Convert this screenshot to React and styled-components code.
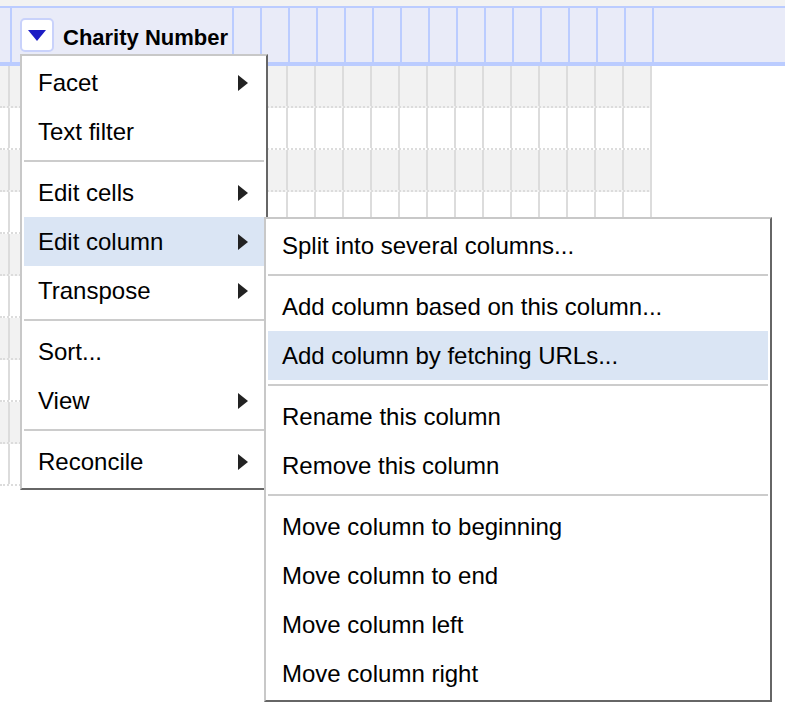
import styled, { createGlobalStyle } from 'styled-components';

const GlobalStyle = createGlobalStyle`
  body {
    margin: 0;
    background: #fff;
    font-family: "Liberation Sans", Arial, sans-serif;
  }
`

const NARROW_COLS = 15
const ROWS = 10

const mainMenu = [
    { label: 'Facet', sub: true },
    { label: 'Text filter' },
    'sep',
    { label: 'Edit cells', sub: true },
    { label: 'Edit column', sub: true, active: true },
    { label: 'Transpose', sub: true },
    'sep',
    { label: 'Sort...' },
    { label: 'View', sub: true },
    'sep',
    { label: 'Reconcile', sub: true },
]

const columnMenu = [
    { label: 'Split into several columns...' },
    'sep',
    { label: 'Add column based on this column...' },
    { label: 'Add column by fetching URLs...', active: true },
    'sep',
    { label: 'Rename this column' },
    { label: 'Remove this column' },
    'sep',
    { label: 'Move column to beginning' },
    { label: 'Move column to end' },
    { label: 'Move column left' },
    { label: 'Move column right' },
]

const MenuItems = ({ items }) => (
    <>
        {items.map((item, i) =>
            item === 'sep' ? (
                <Separator key={i} />
            ) : (
                <Item key={i} $active={item.active}>
                    <span>{item.label}</span>
                    {item.sub && <Arrow />}
                </Item>
            )
        )}
    </>
)

const App = () => {
    const narrow = Array.from({ length: NARROW_COLS })
    const rows = Array.from({ length: ROWS })

    return (
        <>
            <GlobalStyle />
            <Page>
                <TopStrip />
                <HeaderRow>
                    <HeadEdge />
                    <TitleCell>
                        <DropButton>
                            <svg width="18" height="11" viewBox="0 0 18 11">
                                <path d="M0 0 H18 L9 11 Z" fill="#1c1cc4" />
                            </svg>
                        </DropButton>
                        <HeadTitle>Charity Number</HeadTitle>
                    </TitleCell>
                    {narrow.map((_, i) => (
                        <HeadCell key={i} />
                    ))}
                    <HeadFiller />
                </HeaderRow>
                <Body>
                    {rows.map((_, r) => (
                        <Row key={r} $odd={r % 2 === 0}>
                            <Cell $width={8} />
                            <Cell $width={220} />
                            {narrow.map((_, i) => (
                                <Cell key={i} $width={26} />
                            ))}
                        </Row>
                    ))}
                </Body>

                <Menu $left={20} $top={54} $width={248}>
                    <MenuItems items={mainMenu} />
                </Menu>
                <Menu $left={264} $top={217} $width={508}>
                    <MenuItems items={columnMenu} />
                </Menu>
            </Page>
        </>
    );
};

export default App;

const Page = styled.div`
    position: relative;
    width: 785px;
    height: 716px;
    overflow: hidden;
    background: #fff;
`
const TopStrip = styled.div`
    height: 6px;
    background: #f2f2f2;
`
const HeaderRow = styled.div`
    display: flex;
    height: 54px;
    background: #e9ebf8;
    border-top: 2px solid #bbccff;
    border-bottom: 4px solid #bbccff;
`
const HeadEdge = styled.div`
    width: 10px;
    flex: none;
`
const HeadCell = styled.div`
    width: 26px;
    flex: none;
    border-left: 2px solid #bbccff;
`
const TitleCell = styled.div`
    width: 212px;
    flex: none;
    border-left: 2px solid #bbccff;
    padding-left: 8px;
    display: flex;
    align-items: center;
`
const HeadFiller = styled.div`
    flex: 1;
    border-left: 2px solid #bbccff;
`
const DropButton = styled.div`
    width: 30px;
    height: 30px;
    flex: none;
    background: #fff;
    border: 2px solid #c9d2fb;
    border-radius: 5px;
    display: flex;
    align-items: center;
    justify-content: center;
`
const HeadTitle = styled.span`
    margin-left: 9px;
    margin-top: 5px;
    font-size: 22px;
    font-weight: bold;
    color: #000;
    white-space: nowrap;
`
const Body = styled.div`
    display: flex;
    flex-direction: column;
`
const Row = styled.div`
    display: flex;
    height: 40px;
    border-bottom: 2px dotted #dcdcdc;
    width: 652px;
    background: ${p => (p.$odd ? '#f2f2f2' : '#fff')};
`
const Cell = styled.div`
    width: ${p => p.$width}px;
    flex: none;
    border-right: 2px solid #dcdcdc;
`
const Menu = styled.div`
    position: absolute;
    left: ${p => p.$left}px;
    top: ${p => p.$top}px;
    width: ${p => p.$width}px;
    box-sizing: border-box;
    padding: 2px;
    background: #fff;
    border-left: 2px solid #c8c8c8;
    border-top: 2px solid #c8c8c8;
    border-right: 2px solid #666;
    border-bottom: 2px solid #666;
`
const Item = styled.div`
    height: 49px;
    display: flex;
    align-items: center;
    justify-content: space-between;
    padding: 0 16px 0 14px;
    font-size: 24px;
    color: #000;
    white-space: nowrap;
    background: ${p => (p.$active ? '#dae5f4' : 'transparent')};
`
const Arrow = styled.span`
    width: 0;
    height: 0;
    border-left: 10px solid #222;
    border-top: 8.5px solid transparent;
    border-bottom: 8.5px solid transparent;
`
const Separator = styled.div`
    height: 2px;
    background: #cccccc;
    margin: 4px 0 6px;
`
